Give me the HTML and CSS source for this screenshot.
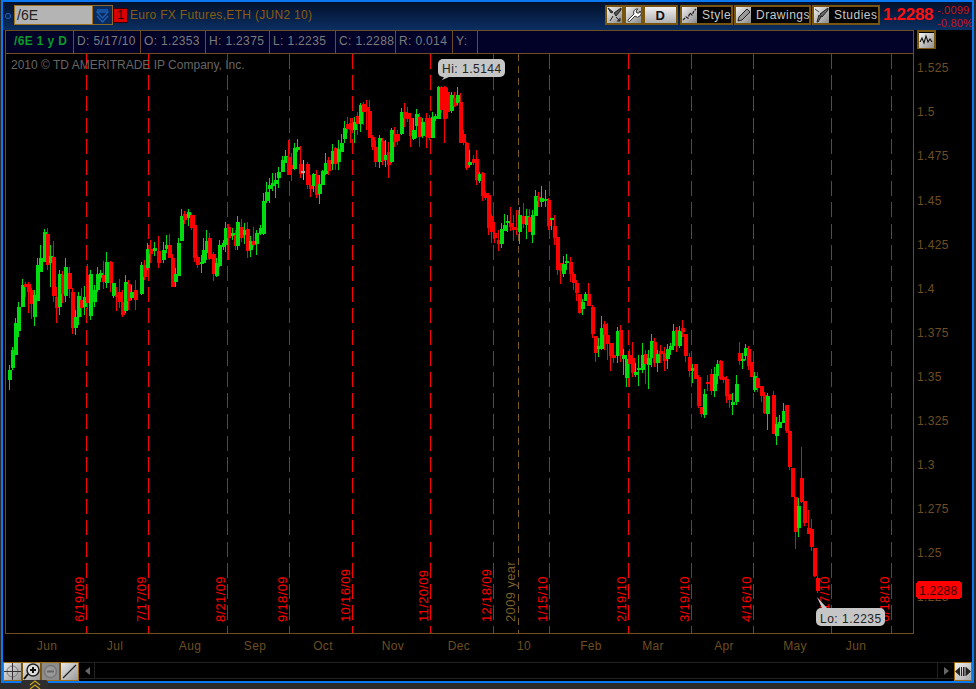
FILE: index.html
```html
<!DOCTYPE html>
<html lang="en">
<head>
<meta charset="utf-8">
<title>/6E Chart</title>
<link rel="stylesheet" href="styles.css">
</head>
<body>
<div class="app">
  <div class="window">
    <header class="header">
      <span class="dot"></span>
      <div class="symbol">/6E</div>
      <div class="drop"><svg width="17" height="17" viewBox="0 0 17 17"><path d="M3 3h11M3 5h11l-5.500 6zM3 9l5.500 6L14 9" fill="none" stroke="#1a5fb8" stroke-width="1.300"/></svg></div>
      <div class="alert">1</div>
      <div class="title">Euro FX Futures,ETH (JUN2 10)</div>
      <div class="tools">
        <div class="tb tb-icon"><span class="ico"><svg width="15" height="16" viewBox="0 0 15 16"><path d="M1 1l3 5 2-1zM14 1l-7 5 2 3 5-6zM6 9l-3 5M9 10l4 4m0-3v3h-3" fill="#555" stroke="#222"/></svg></span></div>
        <div class="tb tb-icon"><span class="ico"><svg width="15" height="16" viewBox="0 0 15 16"><path d="M2 13l6-6a3.500 3.500 0 0 1 4-5l-2 2 1 2 2 0 1-2a3.500 3.500 0 0 1-5 5l-5 5a1 1 0 0 1-2-1z" fill="#fff" stroke="#333"/></svg></span></div>
        <div class="tb tb-d">D</div>
        <div class="tb tb-label tb-style"><span class="ico"><svg width="15" height="16" viewBox="0 0 15 16"><path d="M1 13l3-3 2 1 2-5 2 2 2-4 2-2" fill="none" stroke="#222" stroke-width="1.300" stroke-dasharray="3 1"/></svg></span><span>Style</span></div>
        <div class="tb tb-label tb-draw"><span class="ico"><svg width="15" height="16" viewBox="0 0 15 16"><path d="M11 2l3 3-8 8-4 1 1-4z" fill="#999" stroke="#222"/></svg></span><span>Drawings</span></div>
        <div class="tb tb-label tb-studies"><span class="ico"><svg width="15" height="16" viewBox="0 0 15 16"><path d="M14 1L6 7l2 3 6-7zM5 8l-2 7 1 0 3-5z" fill="#666" stroke="#222"/><path d="M1 2l4 3" stroke="#444"/></svg></span><span>Studies</span></div>
      </div>
      <div class="last">1.2288</div>
      <div class="change"><span>-.0099</span><span>-0.80%</span></div>
    </header>

    <div class="inforow">
      <div class="infobar">
        <div class="cell cell-sym">/6E 1 y D</div>
        <div class="cell cell-d">D: 5/17/10</div>
        <div class="cell cell-o">O: 1.2353</div>
        <div class="cell cell-h">H: 1.2375</div>
        <div class="cell cell-l">L: 1.2235</div>
        <div class="cell cell-c">C: 1.2288</div>
        <div class="cell cell-r">R: 0.014</div>
        <div class="cell cell-y">Y:</div>
      </div>
      <div class="sidebtn"><span class="sideico"><svg width="15" height="13" viewBox="0 0 15 13"><path d="M1 9l2-4 2 5 2-7 2 6 2-3 2 3" fill="none" stroke="#111" stroke-width="1.100"/></svg></span></div>
    </div>

    <svg id="chart" class="chart" width="969" height="606" viewBox="3 53 969 606" shape-rendering="crispEdges">
      <g id="lines"></g>
      <g id="candles"></g>
      <text class="copy" x="11" y="69">2010 © TD AMERITRADE IP Company, Inc.</text>
      <g id="dates"></g>
      <path d="M5.500 53V633.500H913.500V53" class="frame" fill="none"/>
      <g id="prices"></g>
      <g id="months"></g>
      <rect x="916" y="581" width="46" height="18" rx="4" fill="#ff0000"/>
      <text class="tagtext" x="919" y="595">1.2288</text>
      <g shape-rendering="auto">
        <path d="M437 87l7-10h5l-7 3z" fill="#c6c6c6"/>
        <rect x="438" y="59" width="67" height="18" rx="5" fill="#c6c6c6"/>
        <text class="bubble" x="442" y="73">Hi: 1.5144</text>
        <path d="M817 597l10 11h-5z" fill="#c6c6c6"/>
        <rect x="816" y="608" width="69" height="18" rx="5" fill="#c6c6c6"/>
        <text class="bubble" x="820" y="623">Lo: 1.2235</text>
      </g>
    </svg>

    <div class="scrollrow">
      <div class="toolgroup">
        <span class="sq"><svg width="17" height="17" viewBox="0 0 17 17"><circle cx="8.500" cy="8.500" r="5.500" fill="none" stroke="#777"/><path d="M8.500 0v17M0 8.500h17" stroke="#333"/></svg></span>
        <span class="sq"><svg width="17" height="17" viewBox="0 0 17 17"><circle cx="10" cy="7" r="6" fill="#ddd" stroke="#222" stroke-width="1.500"/><path d="M7 7h6M10 4v6" stroke="#111" stroke-width="2"/><path d="M5 11l-4 5" stroke="#111" stroke-width="2"/></svg></span>
        <span class="sq sq-off"><svg width="17" height="17" viewBox="0 0 17 17"><circle cx="8.500" cy="8.500" r="6" fill="#999" stroke="#777" stroke-width="1.500"/><path d="M5 8.500h7" stroke="#666" stroke-width="2"/></svg></span>
        <span class="sq"><svg width="17" height="17" viewBox="0 0 17 17"><path d="M2 15L15 2" stroke="#222" stroke-width="1.200"/></svg></span>
      </div>
      <div class="track">
        <span class="arrow arrow-l"></span>
        <span class="track-mid"></span>
        <span class="arrow-cell"><span class="arrow arrow-r"></span></span>
      </div>
      <div class="expand"><span class="expand-in"><svg width="16" height="15" viewBox="0 0 16 15"><path d="M0 7.500L5 3v9zM16 7.500L11 3v9z" fill="#222"/><path d="M6.500 3v9M8.500 3v9M10 3v9" stroke="#222"/></svg></span></div>
    </div>
  </div>
  <div class="tab"><svg width="12" height="9" viewBox="0 0 12 9"><path d="M1 5l5-4 5 4M1 9l5-4 5 4" fill="none" stroke="#c8a020" stroke-width="1.300"/></svg></div>
</div>
<script src="chart.js"></script>
</body>
</html>
```

FILE: styles.css
```css
* { box-sizing: border-box; }
html, body { margin: 0; padding: 0; background: #2b2b2b; }
body { width: 976px; height: 689px; overflow: hidden; font-family: "Liberation Sans", Arial, sans-serif; }

.app { position: relative; width: 976px; height: 689px; padding-left: 1px; background: #2b2b2b; }
.window { width: 973px; height: 683px; border: 2px solid #0a78f0; background: #000; display: flex; flex-direction: column; }

.header { height: 28px; flex: none; display: flex; align-items: center; overflow: hidden; background: linear-gradient(#03102a, #0a2f62); padding-bottom: 2px; }
.dot { width: 6px; height: 6px; margin-left: 2px; margin-top: 2px; border: 1px solid #1a6ad0; border-radius: 50%; flex: none; }
.symbol { width: 79px; height: 20px; margin-left: 3px; border: 1px solid #a0701c; background: #b4b4b4; color: #222; font-size: 14px; line-height: 18px; padding-left: 2px; flex: none; }
.drop { width: 20px; height: 20px; border: 1px solid #8a6a2a; border-left: 0; background: #0a2a5c; display: flex; align-items: center; justify-content: center; flex: none; }
.alert { width: 15px; height: 15px; margin-top: 1px; background: #d80000; border: 1px solid #300; color: #200; font-size: 12px; line-height: 13px; text-align: center; flex: none; }
.title { margin-left: 2px; color: #8a5c10; font-size: 12px; letter-spacing: 0.31px; white-space: nowrap; flex: none; width: 475px; }

.tools { display: flex; align-items: stretch; height: 20px; flex: none; }
.tb { border: 2px solid #7a5510; background: #000; display: flex; align-items: center; color: #c8c8c8; font-size: 12px; letter-spacing: 0.5px; }
.ico { width: 15px; height: 16px; background: linear-gradient(135deg, #f0f0f0, #8a8a8a); display: block; flex: none; }
.ico svg, .sq svg, .sideico svg, .expand-in svg { display: block; }
.tb-icon { width: 19px; justify-content: center; }
.tb-d { width: 35px; justify-content: center; background: linear-gradient(#f0f0f0, #b0b0b0); color: #111; font-weight: bold; font-size: 13px; }
.tb-label { gap: 5px; }
.tb-style { width: 53px; margin-left: 2px; }
.tb-draw { width: 77px; margin-left: 1px; }
.tb-studies { width: 68px; margin-left: 1px; }

.last { margin-left: 3px; width: 50px; color: #ff1010; font-size: 17px; font-weight: bold; letter-spacing: -0.3px; flex: none; }
.change { margin-left: 4px; margin-top: 2px; align-self: flex-start; color: #d01010; font-size: 11px; line-height: 13px; display: flex; flex-direction: column; white-space: nowrap; flex: none; letter-spacing: 0.2px; }

.inforow { height: 23px; flex: none; display: flex; align-items: flex-start; background: #000; }
.infobar { width: 909px; height: 24px; margin-left: 2px; flex: none; display: flex; background: #020228; border: 1px solid #6e4e20; font-size: 12px; letter-spacing: 0.35px; color: #7c7c7c; }
.cell { border-right: 1px solid #6e4e20; line-height: 21px; padding-left: 3px; white-space: nowrap; flex: none; overflow: hidden; }
.cell-sym { width: 68px; color: #0a9a2c; font-weight: bold; padding-left: 8px; }
.cell-d { width: 67px; }
.cell-o { width: 65px; }
.cell-h { width: 64px; }
.cell-l { width: 66px; }
.cell-c { width: 60px; }
.cell-r { width: 57px; }
.cell-y { width: 25px; }
.sidebtn { width: 19px; height: 19px; margin-left: 3px; border: 2px solid #7a5510; flex: none; }
.sideico { display: block; width: 15px; height: 15px; background: linear-gradient(135deg, #f4f4f4, #909090); }
.sideico svg { margin-top: 1px; }

.chart { display: block; flex: none; }
.frame { stroke: #6e4e20; stroke-width: 1; }
.copy { fill: #666; font: 12px "Liberation Sans", Arial, sans-serif; }
.price { fill: #6e4e20; font: 12px "Liberation Sans", Arial, sans-serif; letter-spacing: 0.35px; }
.month { fill: #6e4e20; font: 12px "Liberation Sans", Arial, sans-serif; letter-spacing: 0.35px; text-anchor: middle; }
.date { fill: #ff0000; font: 13px "Liberation Sans", Arial, sans-serif; letter-spacing: 0.35px; }
.date-year { fill: #7a5e28; }
.tagtext { fill: #3a0000; font: 12px "Liberation Sans", Arial, sans-serif; letter-spacing: 0.3px; }
.bubble { fill: #222; font: 12px "Liberation Sans", Arial, sans-serif; letter-spacing: 0.5px; }
.vline { stroke: #ff0000; stroke-width: 1; stroke-dasharray: 15 6.200; fill: none; }
.vline-year { stroke: #7a5a20; stroke-dasharray: 7 5; }

.scrollrow { height: 22px; flex: none; display: flex; align-items: flex-end; }
.toolgroup { width: 76px; height: 19px; border: 1px solid #a06c10; background: #7a5510; display: flex; gap: 2px; flex: none; }
.sq { width: 17px; height: 17px; background: linear-gradient(135deg, #e8e8e8, #999); display: block; flex: none; }
.sq-off { background: #8c8c8c; }
.track { width: 875px; height: 17px; margin-bottom: 2px; flex: none; display: flex; border-top: 1px solid #222; border-bottom: 1px solid #222; }
.track-mid { flex: 1; border-left: 1px solid #222; border-right: 1px solid #222; margin-left: 4px; }
.arrow { width: 0; height: 0; border-top: 4px solid transparent; border-bottom: 4px solid transparent; flex: none; align-self: center; }
.arrow-l { border-right: 5px solid #666; margin-left: 6px; }
.arrow-r { border-left: 5px solid #666; }
.arrow-cell { width: 16px; display: flex; justify-content: center; flex: none; }
.expand { width: 18px; height: 19px; border: 1px solid #a06c10; flex: none; background: #000; }
.expand-in { display: block; height: 17px; background: linear-gradient(135deg, #f0f0f0, #aaa); padding-top: 1px; }

.tab { position: absolute; left: 21px; top: 680px; width: 27px; height: 9px; background: #2e2e2e; border-radius: 3px 3px 0 0; display: flex; justify-content: center; }
```

FILE: chart.js
```js
var NS = "http://www.w3.org/2000/svg";
var DATA = "g 8 370 380 365 390;g 11 350 368 347 370;g 14 323 355 318 355;g 17 307 331 302 337;g 21 285 307 279 307;r 24 284 287 282 297;r 27 284 292 282 313;r 30 290 304 288 319;g 33 295 317 290 326;g 36 265 301 258 301;g 39 258 272 245 272;g 43 232 262 229 262;r 46 234 265 228 270;g 49 256 263 245 287;r 52 257 296 241 302;r 55 297 308 287 323;g 58 274 307 270 315;r 61 275 294 271 303;g 64 267 296 258 302;r 68 273 289 267 298;r 71 292 328 288 334;g 74 317 328 310 335;g 77 296 317 292 325;r 80 300 308 288 317;g 83 297 307 286 315;r 86 275 303 264 309;g 89 274 316 270 320;g 93 290 302 285 307;g 96 274 290 267 292;g 99 273 278 270 282;r 102 275 282 261 289;g 105 262 283 252 288;r 109 262 283 261 292;g 112 283 296 283 298;r 115 295 297 287 311;r 118 292 302 279 308;r 121 302 315 290 317;g 124 282 311 275 313;r 127 284 301 280 310;g 130 292 298 285 300;r 134 290 300 280 310;g 140 265 294 262 295;r 143 265 277 260 280;g 146 249 268 243 270;r 149 249 254 240 263;g 153 248 251 242 256;r 157 251 263 236 268;g 162 250 260 242 263;g 165 245 249 235 253;r 168 245 258 234 258;r 171 258 287 254 287;g 174 274 282 268 287;g 177 243 276 238 276;g 180 216 241 209 241;r 183 214 220 211 224;g 187 212 218 209 226;r 190 215 228 213 230;r 193 225 258 215 262;r 196 257 265 255 268;g 200 262 264 255 273;g 202 250 263 238 263;g 205 241 253 230 260;r 208 238 259 233 260;r 212 254 274 252 281;g 215 263 276 258 277;g 218 245 266 240 267;g 222 243 247 240 250;g 224 228 245 222 252;r 227 227 238 224 260;g 231 233 236 228 240;r 234 235 246 230 250;g 236 222 246 216 250;r 240 227 238 219 242;g 243 230 235 223 244;r 246 229 251 222 258;g 249 241 250 236 257;r 252 241 245 227 247;g 255 233 244 230 255;g 259 228 234 225 235;g 262 201 234 193 235;g 265 192 201 182 203;g 268 185 189 178 203;g 271 183 186 173 191;g 274 180 184 173 198;g 277 172 178 167 188;g 281 160 172 156 172;g 284 156 163 150 163;r 287 157 175 140 175;r 290 165 169 153 181;g 293 148 169 143 170;g 296 147 150 139 152;r 299 164 174 146 178;w 302 171 174 160 180;r 306 164 185 162 189;r 309 185 189 175 197;g 312 174 186 173 192;r 315 175 195 170 198;g 318 184 194 175 204;g 321 171 185 170 185;g 324 163 174 153 175;r 327 160 171 157 175;g 331 151 164 144 170;r 334 148 164 147 170;g 337 149 162 140 170;g 340 143 152 134 152;g 343 128 139 121 143;r 346 124 129 117 133;r 349 123 130 118 143;g 353 122 130 117 143;r 356 116 124 112 135;g 359 105 124 103 132;r 362 104 112 102 125;r 365 107 111 100 130;r 368 111 138 100 138;r 371 137 147 135 150;r 374 147 162 140 167;g 378 138 162 135 168;r 381 141 161 138 165;g 384 155 160 140 167;r 387 152 165 142 178;g 390 130 162 128 163;r 393 134 142 127 147;r 396 134 141 130 145;g 400 112 134 108 135;r 403 112 118 103 127;r 406 113 119 107 122;r 409 118 136 113 147;g 412 130 139 118 140;g 415 114 126 109 138;r 418 117 137 113 147;g 421 122 136 118 138;r 425 118 137 113 148;r 428 118 138 115 140;g 431 117 138 112 138;g 434 116 119 114 121;g 437 87 119 86 119;r 440 87 110 86 113;r 443 87 119 86 143;r 446 92 112 88 118;g 450 95 111 92 113;r 453 98 106 92 107;g 456 95 103 87 105;r 459 102 143 93 143;r 462 134 143 130 145;r 465 143 168 142 170;g 468 162 165 150 167;r 472 159 163 155 165;r 475 159 180 150 185;g 478 174 181 172 183;r 481 173 196 172 201;r 484 193 198 191 200;r 487 195 228 193 235;r 490 216 232 214 243;r 493 233 238 222 243;r 497 240 244 230 251;g 500 229 244 223 248;g 503 225 231 214 231;g 506 221 223 215 232;r 509 223 227 207 231;r 512 227 230 215 241;r 515 228 230 210 235;g 518 215 232 207 244;r 522 216 224 203 228;g 525 216 225 209 239;r 528 217 232 209 232;g 531 215 235 210 243;g 534 196 216 190 216;r 537 197 201 192 207;g 540 198 202 186 207;g 544 199 201 190 207;r 547 200 226 198 230;g 550 218 220 218 230;r 553 226 238 215 245;r 556 237 270 237 275;r 559 263 271 263 284;g 562 264 274 256 277;g 565 261 263 254 270;r 569 262 274 257 282;r 572 274 283 272 290;r 575 283 293 280 301;r 578 294 313 294 314;g 581 302 309 299 315;g 584 294 301 292 301;r 587 294 306 283 306;r 591 307 334 305 338;r 594 336 353 336 362;g 597 346 349 338 357;g 600 328 349 316 350;r 603 324 335 321 350;r 606 335 344 323 360;r 609 343 356 343 371;r 612 355 358 343 363;g 616 331 356 327 363;r 619 330 356 325 362;g 622 355 359 349 375;g 625 359 378 355 387;r 628 355 364 349 387;r 631 358 373 342 377;g 634 372 375 363 377;g 637 368 370 355 386;g 641 355 370 343 373;r 644 354 364 350 384;g 647 358 365 350 389;g 650 341 358 334 367;r 653 342 363 338 367;g 656 354 363 350 372;r 659 351 354 345 363;r 663 353 361 347 371;g 666 349 359 344 369;g 669 346 350 343 355;g 672 331 346 324 350;r 675 330 346 327 352;g 678 331 346 326 348;r 681 328 332 320 337;r 684 334 356 334 362;r 688 357 371 353 377;g 691 368 371 364 383;r 694 364 379 364 379;r 697 377 406 375 408;r 700 407 414 407 417;g 703 394 415 389 418;r 706 382 384 375 391;r 710 374 391 369 395;g 713 374 391 367 397;g 716 364 376 360 384;r 719 361 379 360 380;r 722 377 380 376 383;r 725 379 396 376 403;r 728 394 400 394 408;g 731 402 405 393 415;g 735 384 402 375 405;r 738 353 361 342 365;g 741 359 361 353 369;g 744 348 356 344 360;r 747 349 366 346 370;r 750 362 377 362 377;g 753 376 390 372 392;r 756 378 388 372 392;r 760 386 396 386 402;r 763 395 413 392 414;g 766 396 414 393 430;r 772 395 434 391 434;g 775 424 436 417 445;g 778 422 428 415 428;g 782 411 423 403 423;r 785 405 431 405 433;r 788 431 467 430 470;r 791 468 497 468 497;r 794 497 532 497 549;g 797 506 528 498 537;r 800 478 502 447 503;r 803 501 523 501 526;r 807 528 534 510 534;r 810 529 547 519 551;r 813 548 576 548 577;r 816 578 591 576 593";
var COLORS = { g: "#00dc10", r: "#ff0000", w: "#b0b0b0" };

function el(name, attrs, parent, text) {
  var node = document.createElementNS(NS, name);
  for (var key in attrs) node.setAttribute(key, attrs[key]);
  if (text) node.textContent = text;
  parent.appendChild(node);
  return node;
}

var candles = document.getElementById("candles");
DATA.split(";").forEach(function (row) {
  var p = row.split(" ");
  var x = +p[1], top = +p[2], bottom = +p[3], hi = +p[4], lo = +p[5];
  var fill = COLORS[p[0]];
  el("rect", { x: x + 1, y: hi, width: 1, height: lo - hi, fill: fill }, candles);
  if (p[0] === "w") {
    el("rect", { x: x - 1, y: top, width: 4, height: bottom - top - 1, fill: fill }, candles);
  } else {
    el("rect", { x: x, y: top, width: 4, height: bottom - top, fill: fill }, candles);
  }
});

var lines = document.getElementById("lines");
[86, 148, 227, 289, 352, 430, 493, 549, 628, 691, 753, 831, 891].forEach(function (x) {
  el("path", { d: "M" + (x + 0.5) + " 54V633", "class": "vline" }, lines);
});
el("path", { d: "M518.500 54V633", "class": "vline vline-year" }, lines);

var dates = document.getElementById("dates");
[[84, "6/19/09"], [146, "7/17/09"], [225, "8/21/09"], [287, "9/18/09"], [350, "10/16/09"], [428, "11/20/09"], [491, "12/18/09"], [547, "1/15/10"], [626, "2/19/10"], [689, "3/19/10"], [751, "4/16/10"], [829, "5/17/10"], [889, "6/18/10"]].forEach(function (d) {
  el("text", { x: d[0], y: 622, transform: "rotate(-90 " + d[0] + " 622)", "class": "date" }, dates, d[1]);
});
el("text", { x: 515, y: 622, transform: "rotate(-90 515 622)", "class": "date date-year" }, dates, "2009 year");

var prices = document.getElementById("prices");
[[72, "1.525"], [116, "1.5"], [160, "1.475"], [205, "1.45"], [249, "1.425"], [293, "1.4"], [337, "1.375"], [381, "1.35"], [425, "1.325"], [469, "1.3"], [513, "1.275"], [557, "1.25"], [601, "1.225"]].forEach(function (p) {
  el("text", { x: 917, y: p[0], "class": "price" }, prices, p[1]);
});

var months = document.getElementById("months");
[[47, "Jun"], [115, "Jul"], [190, "Aug"], [255, "Sep"], [323, "Oct"], [393, "Nov"], [459, "Dec"], [524, "10"], [591, "Feb"], [653, "Mar"], [724, "Apr"], [795, "May"], [856, "Jun"]].forEach(function (m) {
  el("text", { x: m[0], y: 650, "class": "month" }, months, m[1]);
});
```
